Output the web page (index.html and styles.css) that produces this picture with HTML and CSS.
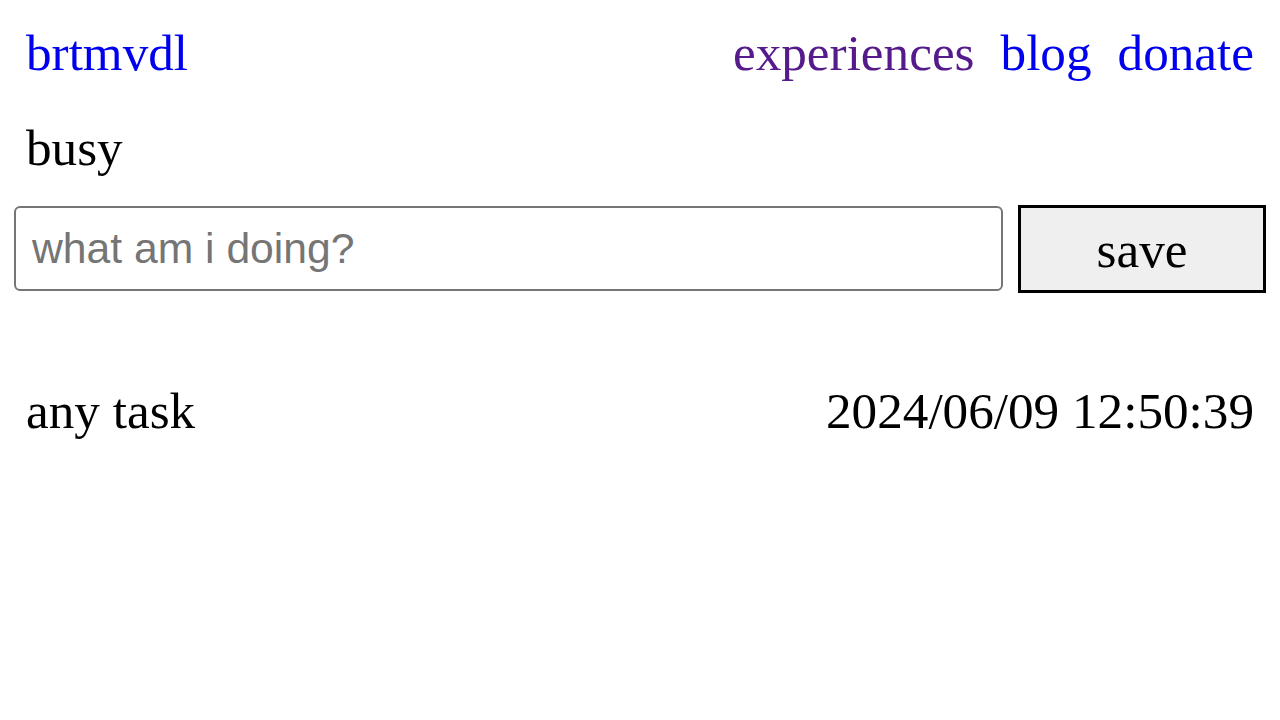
FILE: index.html
```html
<!DOCTYPE html>
<html lang="en">
<head>
<meta charset="utf-8">
<title>brtmvdl</title>
<link rel="stylesheet" href="styles.css">
</head>
<body>
<header class="header">
  <a class="brand" href="#">brtmvdl</a>
  <nav class="nav">
    <a class="nav-link visited" href="#">experiences</a>
    <a class="nav-link" href="#">blog</a>
    <a class="nav-link" href="#">donate</a>
  </nav>
</header>
<main class="main">
  <div class="status">busy</div>
  <form class="task-form">
    <input class="task-input" type="text" placeholder="what am i doing?">
    <button class="save-btn" type="button">save</button>
  </form>
  <ul class="tasks">
    <li class="task-row"><span class="task-name">any task</span><span class="task-time">2024/06/09 12:50:39</span></li>
  </ul>
</main>
</body>
</html>
```
FILE: styles.css
```css
html, body {
  margin: 0;
  padding: 0;
  background: #ffffff;
}
body {
  font-family: "Liberation Serif", "Times New Roman", serif;
  font-size: 51.2px;
  line-height: 57px;
  color: #000000;
  padding: 23.5px 26px;
}
a {
  text-decoration: none;
  color: #0000ee;
}
a.visited {
  color: #551a8b;
}
.header {
  display: flex;
  justify-content: space-between;
  align-items: baseline;
}
.nav {
  display: flex;
  gap: 26px;
}
.main {
  margin-top: 38px;
}
.status {
  margin: 0;
}
.task-form {
  display: flex;
  align-items: flex-start;
  margin: 29.5px -12px 0 -12px;
}
.task-input {
  flex: 1;
  box-sizing: border-box;
  height: 85px;
  margin: 1px 0 0 0;
  padding: 0 16px;
  border: 2px solid #767676;
  border-radius: 6px;
  font-family: "Liberation Sans", Arial, sans-serif;
  font-size: 42.67px;
  color: #000;
  background: #fff;
  outline: none;
}
.task-input::placeholder {
  color: #757575;
}
.save-btn {
  box-sizing: border-box;
  width: 248px;
  height: 88px;
  margin-left: 15px;
  border: 3px solid #000;
  background: #efefef;
  font-family: "Liberation Serif", "Times New Roman", serif;
  font-size: 51.2px;
  color: #000;
  padding: 0;
  border-radius: 0;
}
.tasks {
  list-style: none;
  margin: 89px 0 0 0;
  padding: 0;
}
.task-row {
  display: flex;
  justify-content: space-between;
}
```
